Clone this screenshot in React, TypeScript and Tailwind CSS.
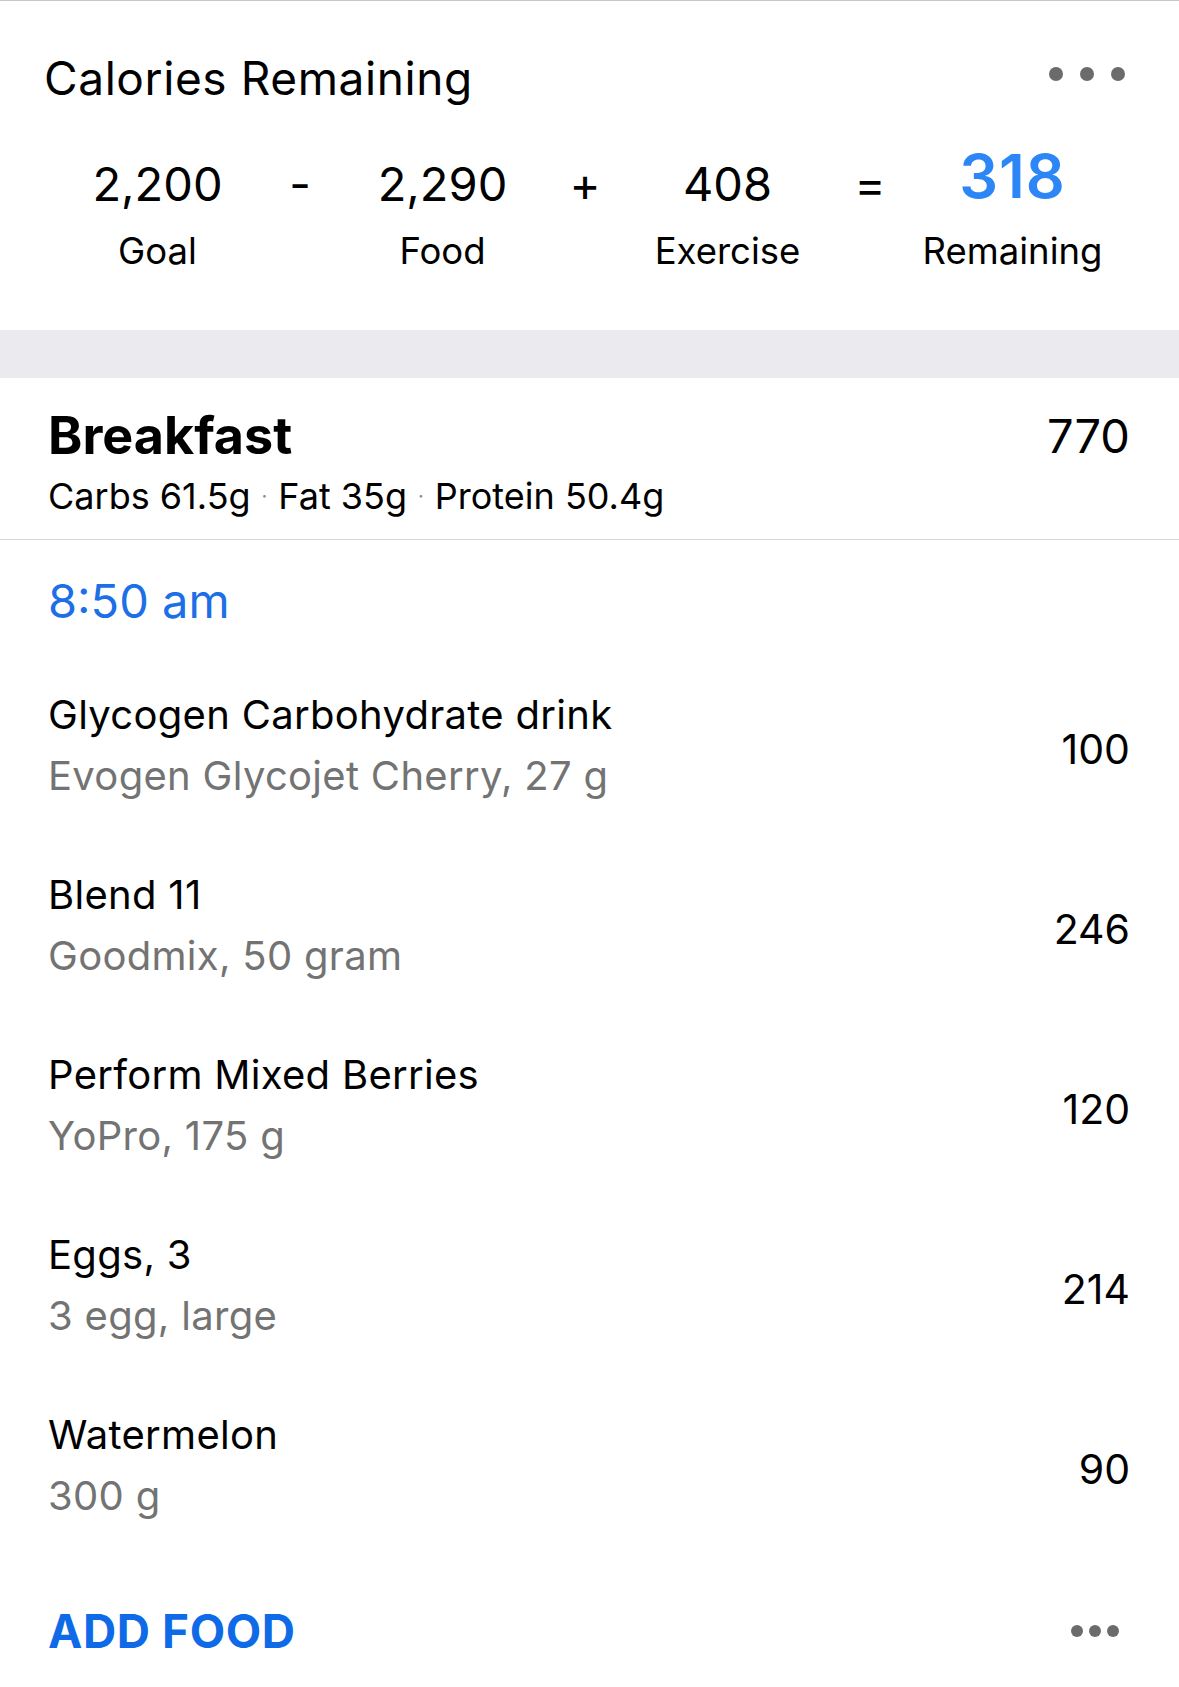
import React from "react"

type Food = { name: string; detail: string; kcal: number }

const foods: Food[] = [
  { name: "Glycogen Carbohydrate drink", detail: "Evogen Glycojet Cherry, 27 g", kcal: 100 },
  { name: "Blend 11", detail: "Goodmix, 50 gram", kcal: 246 },
  { name: "Perform Mixed Berries", detail: "YoPro, 175 g", kcal: 120 },
  { name: "Eggs, 3", detail: "3 egg, large", kcal: 214 },
  { name: "Watermelon", detail: "300 g", kcal: 90 },
]

function Dots({ size, gap }: { size: string; gap: string }) {
  return (
    <div className={`flex ${gap}`}>
      <span className={`${size} rounded-full bg-[#6b6b6b]`}></span>
      <span className={`${size} rounded-full bg-[#6b6b6b]`}></span>
      <span className={`${size} rounded-full bg-[#6b6b6b]`}></span>
    </div>
  )
}

function Stat({ value, label, accent }: { value: string; label: string; accent?: boolean }) {
  return (
    <div className="flex flex-col items-center">
      <div className="h-[60px]">
        {accent ? (
          <div className="-mt-[1px] text-[61px] leading-[60px] font-semibold tracking-[1px] text-[#2d86f5]">{value}</div>
        ) : (
          <div className="pt-[13px] text-[47px] leading-[47px] text-black">{value}</div>
        )}
      </div>
      <div className="mt-[26px] text-[36.5px] leading-[37px] text-black whitespace-nowrap">{label}</div>
    </div>
  )
}

function Op({ sign }: { sign: string }) {
  return <div className="pt-[13px] text-center text-[47px] leading-[47px] text-black">{sign}</div>
}

export default function App() {
  return (
    <div className="w-[1179px] min-h-[1687px] bg-white font-['Inter',sans-serif] text-black">
      {/* calories summary */}
      <div className="border-t border-[#c6c6c8]">
        <div className="flex justify-between items-start pt-[54px] pl-[44px] pr-[54px]">
          <div className="text-[46px] leading-[46px] tracking-[0.6px]">Calories Remaining</div>
          <div className="mt-[12px]">
            <Dots size="w-[14px] h-[14px]" gap="gap-[17px]" />
          </div>
        </div>
        <div className="grid grid-cols-[215px_70px_215px_70px_215px_70px_215px] pl-[50px] mt-[46px] pb-[60px]">
          <Stat value="2,200" label="Goal" />
          <Op sign="-" />
          <Stat value="2,290" label="Food" />
          <Op sign="+" />
          <Stat value="408" label="Exercise" />
          <Op sign="=" />
          <Stat value="318" label="Remaining" accent />
        </div>
      </div>

      <div className="h-[48px] bg-[#eaeaef]"></div>

      {/* breakfast header */}
      <div className="border-b border-[#d8d8dc] pl-[48px] pr-[49px] pt-[32px] pb-[25px]">
        <div className="flex justify-between items-start">
          <div className="text-[52px] leading-[52px] font-bold">Breakfast</div>
          <div className="mt-[2px] text-[47px] leading-[47px]">770</div>
        </div>
        <div className="mt-[16px] text-[36px] leading-[36px] flex items-center">
          <span>Carbs 61.5g</span>
          <span className="mx-[11px] text-[20px] text-[#8a8a8e]">·</span>
          <span>Fat 35g</span>
          <span className="mx-[11px] text-[20px] text-[#8a8a8e]">·</span>
          <span>Protein 50.4g</span>
        </div>
      </div>

      <div className="pl-[48px] pt-[37px] text-[47px] leading-[47px] text-[#1c6fe6]">8:50 am</div>

      <div className="mt-[31px]">
        {foods.map((f) => (
          <div key={f.name} className="flex justify-between items-center h-[180px] pl-[48px] pr-[49px]">
            <div className="flex flex-col">
              <div className="text-[40px] leading-[40px] tracking-[0.3px]">{f.name}</div>
              <div className="mt-[21px] text-[40px] leading-[40px] tracking-[0.3px] text-[#737373]">{f.detail}</div>
            </div>
            <div className="mt-[8px] text-[41px] leading-[41px]">{f.kcal}</div>
          </div>
        ))}
      </div>

      <div className="flex justify-between items-center pl-[48px] pr-[60px] mt-[53px]">
        <div className="text-[46px] leading-[46px] font-bold tracking-[0.6px] text-[#0f6ae8]">ADD FOOD</div>
        <Dots size="w-[12px] h-[12px]" gap="gap-[6px]" />
      </div>
    </div>
  )
}
